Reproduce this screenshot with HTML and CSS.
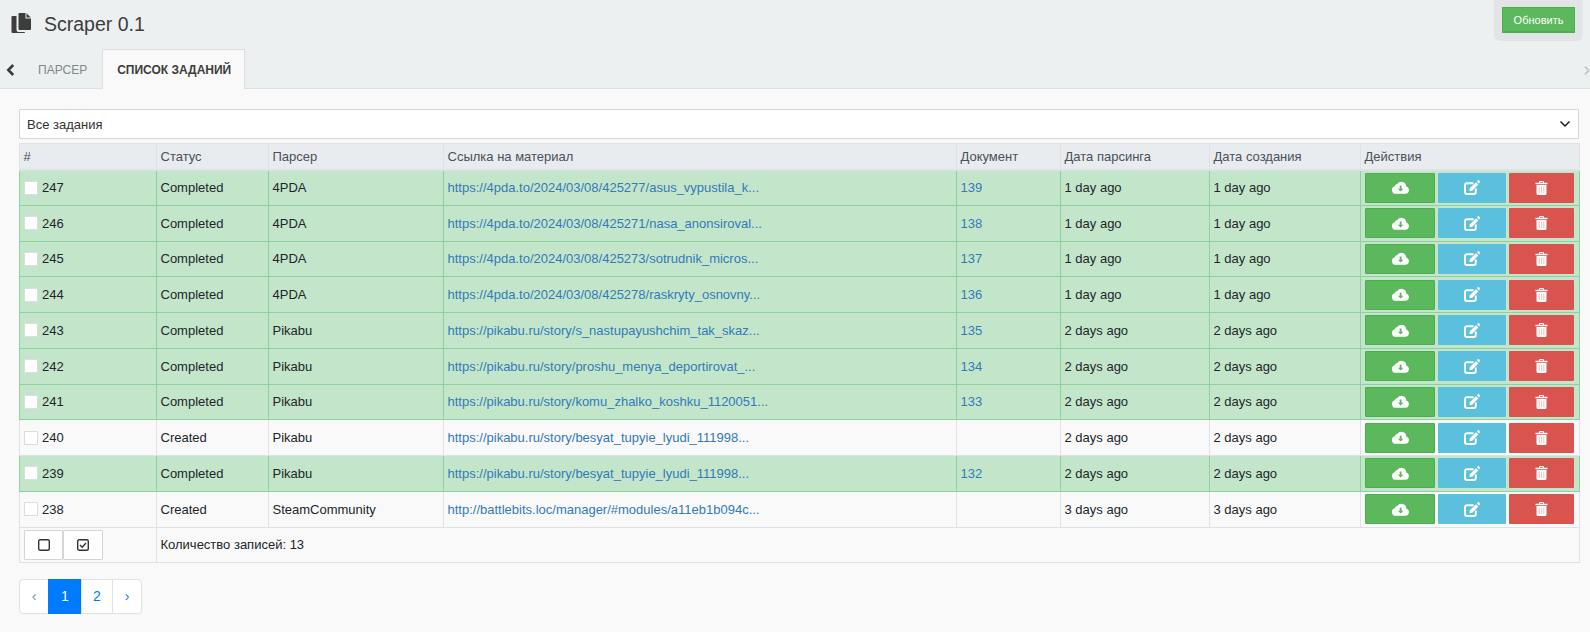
FILE: index.html
```html
<!DOCTYPE html>
<html lang="ru">

<head>
    <meta charset="UTF-8">
    <meta name="viewport" content="width=device-width, initial-scale=1.0">
    <title>Scraper 0.1</title>
    <link rel="stylesheet" href="styles.css">
</head>

<body>
    <svg class="icon-defs" aria-hidden="true">
        <symbol id="i-files" viewBox="0 0 20 20">
            <path d="M8 0h6v5.5h5.5V16a1 1 0 0 1-1 1H8a1 1 0 0 1-1-1V1a1 1 0 0 1 1-1z" fill="#3d3d3d" transform="translate(.5 0)"/>
            <path d="M15.5 .3l4.3 4.2h-4.3z" fill="#3d3d3d"/>
            <path d="M5.5 3v14a2 2 0 0 0 2 2H14v.2a.8.8 0 0 1-.8.8H1.5a1 1 0 0 1-1-1V4a1 1 0 0 1 1-1z" fill="#3d3d3d"/>
        </symbol>
        <symbol id="i-cloud" viewBox="0 0 17 13">
            <path d="M3.900 12.800A3.900 3.900 0 0 1 2.600 5.200 3 3 0 0 1 5.300 2.900 5 5 0 0 1 14.300 5.400 3.800 3.800 0 0 1 13.300 12.800z" fill="#fff"/>
            <path d="M7.700 4.500h1.800v3.200h1.900L8.600 10.600 5.800 7.700h1.900z" fill="#5cb85c"/>
        </symbol>
        <symbol id="i-edit" viewBox="0 0 16 15">
            <path d="M9.500 3.200H3a2 2 0 0 0-2 2V12a2 2 0 0 0 2 2h6.800a2 2 0 0 0 2-2V8.500" fill="none" stroke="#fff" stroke-width="2"/>
            <path d="M12 2.200l2.400 2.400L8 11H5.600V8.600zM12.900 1.300l1-1a.7.7 0 0 1 1 0l1 1a.7.7 0 0 1 0 1l-1 1.100z" fill="#fff"/>
        </symbol>
        <symbol id="i-trash" viewBox="0 0 13 14">
            <path d="M4 1.800V1a1 1 0 0 1 1-1h3a1 1 0 0 1 1 1v.8h3.500v1.500H.5V1.800zM5.100 1.800h2.800V1H5.100z" fill="#fff"/>
            <path d="M1.500 4h10v8.500a1.500 1.500 0 0 1-1.500 1.500H3a1.500 1.500 0 0 1-1.500-1.500z" fill="#fff"/>
            <path d="M3.800 5.500h.9v6.500h-.9zM6.050 5.500h.9v6.500h-.9zM8.300 5.500h.9v6.500h-.9z" fill="#f2bdb9"/>
        </symbol>
        <symbol id="i-square" viewBox="0 0 12 12">
            <rect x=".7" y=".7" width="10.600" height="10.600" rx="1.500" fill="none" stroke="#333" stroke-width="1.400"/>
        </symbol>
        <symbol id="i-check" viewBox="0 0 12 12">
            <rect x=".7" y=".7" width="10.600" height="10.600" rx="1.500" fill="none" stroke="#333" stroke-width="1.400"/>
            <path d="M3 6l2.200 2.200L9 4" fill="none" stroke="#333" stroke-width="1.400"/>
        </symbol>
    </svg>

    <header class="topbar">
        <div class="title-row">
            <svg class="title-icon"><use href="#i-files"/></svg>
            <h1>Scraper 0.1</h1>
            <div class="update-panel">
                <button class="btn-update" type="button">Обновить</button>
            </div>
        </div>
        <nav class="tabs">
            <svg class="tab-arrow" viewBox="0 0 9 12"><path d="M7.200 1L2.300 6l4.900 5" fill="none" stroke="#3d3d3d" stroke-width="2.600"/></svg>
            <a class="tab" href="#">ПАРСЕР</a>
            <a class="tab tab-active" href="#">СПИСОК ЗАДАНИЙ</a>
            <svg class="tab-arrow tab-arrow-right" viewBox="0 0 6 9"><path d="M1 .7l3.600 3.800L1 8.300" fill="none" stroke="#c4c8ca" stroke-width="1.800"/></svg>
        </nav>
    </header>

    <main class="content">
        <select class="task-filter">
            <option>Все задания</option>
        </select>

        <table class="tasks">
            <colgroup>
                <col class="col-id">
                <col class="col-status">
                <col class="col-parser">
                <col class="col-link">
                <col class="col-doc">
                <col class="col-date">
                <col class="col-date2">
                <col class="col-actions">
            </colgroup>
            <thead>
                <tr>
                    <th>#</th>
                    <th>Статус</th>
                    <th>Парсер</th>
                    <th>Ссылка на материал</th>
                    <th>Документ</th>
                    <th>Дата парсинга</th>
                    <th>Дата создания</th>
                    <th>Действия</th>
                </tr>
            </thead>
            <tbody>
                <tr class="done">
                    <td><label class="row-check"><input type="checkbox">247</label></td>
                    <td>Completed</td>
                    <td>4PDA</td>
                    <td><a href="#">https://4pda.to/2024/03/08/425277/asus_vypustila_k...</a></td>
                    <td><a href="#">139</a></td>
                    <td>1 day ago</td>
                    <td>1 day ago</td>
                    <td><div class="actions"><button class="act act-get"><svg class="ic-cloud"><use href="#i-cloud"/></svg></button><button class="act act-edit"><svg class="ic-edit"><use href="#i-edit"/></svg></button><button class="act act-del"><svg class="ic-trash"><use href="#i-trash"/></svg></button></div></td>
                </tr>
                <tr class="done">
                    <td><label class="row-check"><input type="checkbox">246</label></td>
                    <td>Completed</td>
                    <td>4PDA</td>
                    <td><a href="#">https://4pda.to/2024/03/08/425271/nasa_anonsiroval...</a></td>
                    <td><a href="#">138</a></td>
                    <td>1 day ago</td>
                    <td>1 day ago</td>
                    <td><div class="actions"><button class="act act-get"><svg class="ic-cloud"><use href="#i-cloud"/></svg></button><button class="act act-edit"><svg class="ic-edit"><use href="#i-edit"/></svg></button><button class="act act-del"><svg class="ic-trash"><use href="#i-trash"/></svg></button></div></td>
                </tr>
                <tr class="done">
                    <td><label class="row-check"><input type="checkbox">245</label></td>
                    <td>Completed</td>
                    <td>4PDA</td>
                    <td><a href="#">https://4pda.to/2024/03/08/425273/sotrudnik_micros...</a></td>
                    <td><a href="#">137</a></td>
                    <td>1 day ago</td>
                    <td>1 day ago</td>
                    <td><div class="actions"><button class="act act-get"><svg class="ic-cloud"><use href="#i-cloud"/></svg></button><button class="act act-edit"><svg class="ic-edit"><use href="#i-edit"/></svg></button><button class="act act-del"><svg class="ic-trash"><use href="#i-trash"/></svg></button></div></td>
                </tr>
                <tr class="done">
                    <td><label class="row-check"><input type="checkbox">244</label></td>
                    <td>Completed</td>
                    <td>4PDA</td>
                    <td><a href="#">https://4pda.to/2024/03/08/425278/raskryty_osnovny...</a></td>
                    <td><a href="#">136</a></td>
                    <td>1 day ago</td>
                    <td>1 day ago</td>
                    <td><div class="actions"><button class="act act-get"><svg class="ic-cloud"><use href="#i-cloud"/></svg></button><button class="act act-edit"><svg class="ic-edit"><use href="#i-edit"/></svg></button><button class="act act-del"><svg class="ic-trash"><use href="#i-trash"/></svg></button></div></td>
                </tr>
                <tr class="done">
                    <td><label class="row-check"><input type="checkbox">243</label></td>
                    <td>Completed</td>
                    <td>Pikabu</td>
                    <td><a href="#">https://pikabu.ru/story/s_nastupayushchim_tak_skaz...</a></td>
                    <td><a href="#">135</a></td>
                    <td>2 days ago</td>
                    <td>2 days ago</td>
                    <td><div class="actions"><button class="act act-get"><svg class="ic-cloud"><use href="#i-cloud"/></svg></button><button class="act act-edit"><svg class="ic-edit"><use href="#i-edit"/></svg></button><button class="act act-del"><svg class="ic-trash"><use href="#i-trash"/></svg></button></div></td>
                </tr>
                <tr class="done">
                    <td><label class="row-check"><input type="checkbox">242</label></td>
                    <td>Completed</td>
                    <td>Pikabu</td>
                    <td><a href="#">https://pikabu.ru/story/proshu_menya_deportirovat_...</a></td>
                    <td><a href="#">134</a></td>
                    <td>2 days ago</td>
                    <td>2 days ago</td>
                    <td><div class="actions"><button class="act act-get"><svg class="ic-cloud"><use href="#i-cloud"/></svg></button><button class="act act-edit"><svg class="ic-edit"><use href="#i-edit"/></svg></button><button class="act act-del"><svg class="ic-trash"><use href="#i-trash"/></svg></button></div></td>
                </tr>
                <tr class="done">
                    <td><label class="row-check"><input type="checkbox">241</label></td>
                    <td>Completed</td>
                    <td>Pikabu</td>
                    <td><a href="#">https://pikabu.ru/story/komu_zhalko_koshku_1120051...</a></td>
                    <td><a href="#">133</a></td>
                    <td>2 days ago</td>
                    <td>2 days ago</td>
                    <td><div class="actions"><button class="act act-get"><svg class="ic-cloud"><use href="#i-cloud"/></svg></button><button class="act act-edit"><svg class="ic-edit"><use href="#i-edit"/></svg></button><button class="act act-del"><svg class="ic-trash"><use href="#i-trash"/></svg></button></div></td>
                </tr>
                <tr>
                    <td><label class="row-check"><input type="checkbox">240</label></td>
                    <td>Created</td>
                    <td>Pikabu</td>
                    <td><a href="#">https://pikabu.ru/story/besyat_tupyie_lyudi_111998...</a></td>
                    <td></td>
                    <td>2 days ago</td>
                    <td>2 days ago</td>
                    <td><div class="actions"><button class="act act-get"><svg class="ic-cloud"><use href="#i-cloud"/></svg></button><button class="act act-edit"><svg class="ic-edit"><use href="#i-edit"/></svg></button><button class="act act-del"><svg class="ic-trash"><use href="#i-trash"/></svg></button></div></td>
                </tr>
                <tr class="done">
                    <td><label class="row-check"><input type="checkbox">239</label></td>
                    <td>Completed</td>
                    <td>Pikabu</td>
                    <td><a href="#">https://pikabu.ru/story/besyat_tupyie_lyudi_111998...</a></td>
                    <td><a href="#">132</a></td>
                    <td>2 days ago</td>
                    <td>2 days ago</td>
                    <td><div class="actions"><button class="act act-get"><svg class="ic-cloud"><use href="#i-cloud"/></svg></button><button class="act act-edit"><svg class="ic-edit"><use href="#i-edit"/></svg></button><button class="act act-del"><svg class="ic-trash"><use href="#i-trash"/></svg></button></div></td>
                </tr>
                <tr>
                    <td><label class="row-check"><input type="checkbox">238</label></td>
                    <td>Created</td>
                    <td>SteamCommunity</td>
                    <td><a href="#">http://battlebits.loc/manager/#modules/a11eb1b094c...</a></td>
                    <td></td>
                    <td>3 days ago</td>
                    <td>3 days ago</td>
                    <td><div class="actions"><button class="act act-get"><svg class="ic-cloud"><use href="#i-cloud"/></svg></button><button class="act act-edit"><svg class="ic-edit"><use href="#i-edit"/></svg></button><button class="act act-del"><svg class="ic-trash"><use href="#i-trash"/></svg></button></div></td>
                </tr>
            </tbody>
            <tfoot>
                <tr>
                    <td><div class="select-btns"><button class="btn-select"><svg><use href="#i-square"/></svg></button><button class="btn-select"><svg><use href="#i-check"/></svg></button></div></td>
                    <td colspan="7">Количество записей: 13</td>
                </tr>
            </tfoot>
        </table>

        <ul class="pagination">
            <li><a href="#">‹</a></li>
            <li class="active"><a href="#">1</a></li>
            <li><a href="#">2</a></li>
            <li><a href="#">›</a></li>
        </ul>
    </main>
</body>

</html>
```

FILE: styles.css
```css
/* Page */
* {
    box-sizing: border-box;
    margin: 0;
    padding: 0;
}

body {
    background-color: #f9f9f9;
    color: #212529;
    font-family: 'Liberation Sans', Arial, sans-serif;
    font-size: 13px;
    height: 632px;
    overflow: hidden;
}

.icon-defs {
    display: none;
}

/* Top bar */
.topbar {
    background-color: #ecf0f1;
    border-bottom: 1px solid #dcdfe0;
    height: 89px;
}

.title-row {
    display: flex;
    height: 49px;
    padding-left: 11px;
}

.title-icon {
    width: 20px;
    height: 20px;
    margin-top: 13px;
}

h1 {
    color: #3d3d3d;
    font-size: 19.500px;
    font-weight: 400;
    line-height: 24px;
    margin: 12px 0 0 13px;
}

.update-panel {
    background-color: #e1e5e6;
    border-radius: 0 0 6px 6px;
    height: 41px;
    margin-left: auto;
    margin-right: 7px;
    padding: 7px 8px;
    width: 89px;
}

.btn-update {
    background-color: #5cb85c;
    border: 1px solid #4cae4c;
    border-bottom-width: 2px;
    color: #fff;
    display: block;
    font-family: inherit;
    font-size: 11px;
    height: 26px;
    width: 73px;
}

.tabs {
    display: flex;
    height: 39px;
}

.tab-arrow {
    align-self: center;
    height: 12px;
    margin: 3px 1px 0 6px;
    width: 9px;
}

.tab-arrow-right {
    height: 9px;
    margin: 3px 0 0 auto;
    width: 6px;
}

.tab {
    color: #7b8a8b;
    font-size: 12px;
    line-height: 43px;
    padding: 0 15px 0 22px;
    text-decoration: none;
    white-space: nowrap;
}

.tab-active {
    background-color: #f9f9f9;
    border: 1px solid #dcdfe0;
    border-bottom: none;
    color: #3d3d3d;
    font-weight: 700;
    height: 40px;
    line-height: 41px;
    padding: 0 14px;
    width: 143px;
}

/* Content */
.content {
    padding: 20px 11px 0 19px;
}

.task-filter {
    appearance: none;
    background-color: #fff;
    background-image: url("data:image/svg+xml,%3Csvg xmlns='http://www.w3.org/2000/svg' width='12' height='8'%3E%3Cpath d='M1.500 1.500L6 6l4.500-4.500' fill='none' stroke='%23111' stroke-width='1.400'/%3E%3C/svg%3E");
    background-position: right 7px center;
    background-repeat: no-repeat;
    border: 1px solid #d5d5d5;
    border-radius: 1px;
    color: #333;
    display: block;
    font-family: inherit;
    font-size: 13px;
    height: 30px;
    padding-left: 7px;
    width: 1560px;
}

.tasks {
    border-collapse: collapse;
    margin-top: 4px;
    table-layout: fixed;
    width: 1560px;
}

.col-id { width: 137px; }
.col-status { width: 112px; }
.col-parser { width: 175px; }
.col-link { width: 513px; }
.col-doc { width: 104px; }
.col-date { width: 149px; }
.col-date2 { width: 151px; }
.col-actions { width: 219px; }

.tasks th {
    background-color: #e9ecef;
    border: 1px solid #dee2e6;
    border-bottom-width: 2px;
    color: #495057;
    font-weight: 400;
    height: 26px;
    padding: 0 3.500px;
    text-align: left;
}

.tasks td {
    border: 1px solid #dee2e6;
    height: 35.750px;
    padding: 0 3.500px;
}

.tasks .done td {
    background-color: #c3e6cb;
    border-color: #8fd19e;
}

.tasks a {
    color: #337ab7;
    text-decoration: none;
}

.row-check {
    align-items: center;
    display: flex;
    gap: 4px;
    margin-left: 0.5px;
}

.row-check input {
    appearance: none;
    background-color: #fff;
    border: 1px solid #ddd;
    height: 14px;
    width: 14px;
}

.actions {
    display: grid;
    gap: 3px;
    grid-template-columns: 70px 68px 65px;
    margin-left: 0.5px;
}

.act {
    align-items: center;
    border: 1px solid transparent;
    border-radius: 1px;
    display: flex;
    height: 30px;
    justify-content: center;
}

.act-get {
    background-color: #5cb85c;
    border-color: #4cae4c;
}

.act-edit {
    background-color: #5bc0de;
}

.act-del {
    background-color: #d9534f;
}

.ic-cloud {
    height: 13px;
    width: 17px;
}

.ic-edit {
    height: 15px;
    width: 16px;
}

.ic-trash {
    height: 14px;
    width: 13px;
}

.select-btns {
    display: flex;
    margin-left: 0.5px;
}

.btn-select {
    align-items: center;
    background-color: #fff;
    border: 1px solid #d5d5d5;
    border-radius: 1px;
    display: flex;
    height: 30px;
    justify-content: center;
    width: 39.300px;
}

.btn-select svg {
    height: 12px;
    width: 12px;
}

/* Pagination */
.pagination {
    display: inline-flex;
    list-style: none;
    margin-top: 16px;
}

.pagination a {
    background-color: #fff;
    border: 1px solid #dee2e6;
    color: #007bff;
    display: block;
    font-size: 14px;
    height: 35px;
    line-height: 32px;
    margin-left: -1px;
    text-align: center;
    text-decoration: none;
    width: 32px;
}

.pagination li:first-child a {
    border-radius: 4px 0 0 4px;
    color: #6c8fb5;
    margin-left: 0;
    width: 30px;
}

.pagination li:last-child a {
    border-radius: 0 4px 4px 0;
    width: 30px;
}

.pagination .active a {
    background-color: #007bff;
    border-color: #007bff;
    color: #fff;
    width: 34px;
}
```
